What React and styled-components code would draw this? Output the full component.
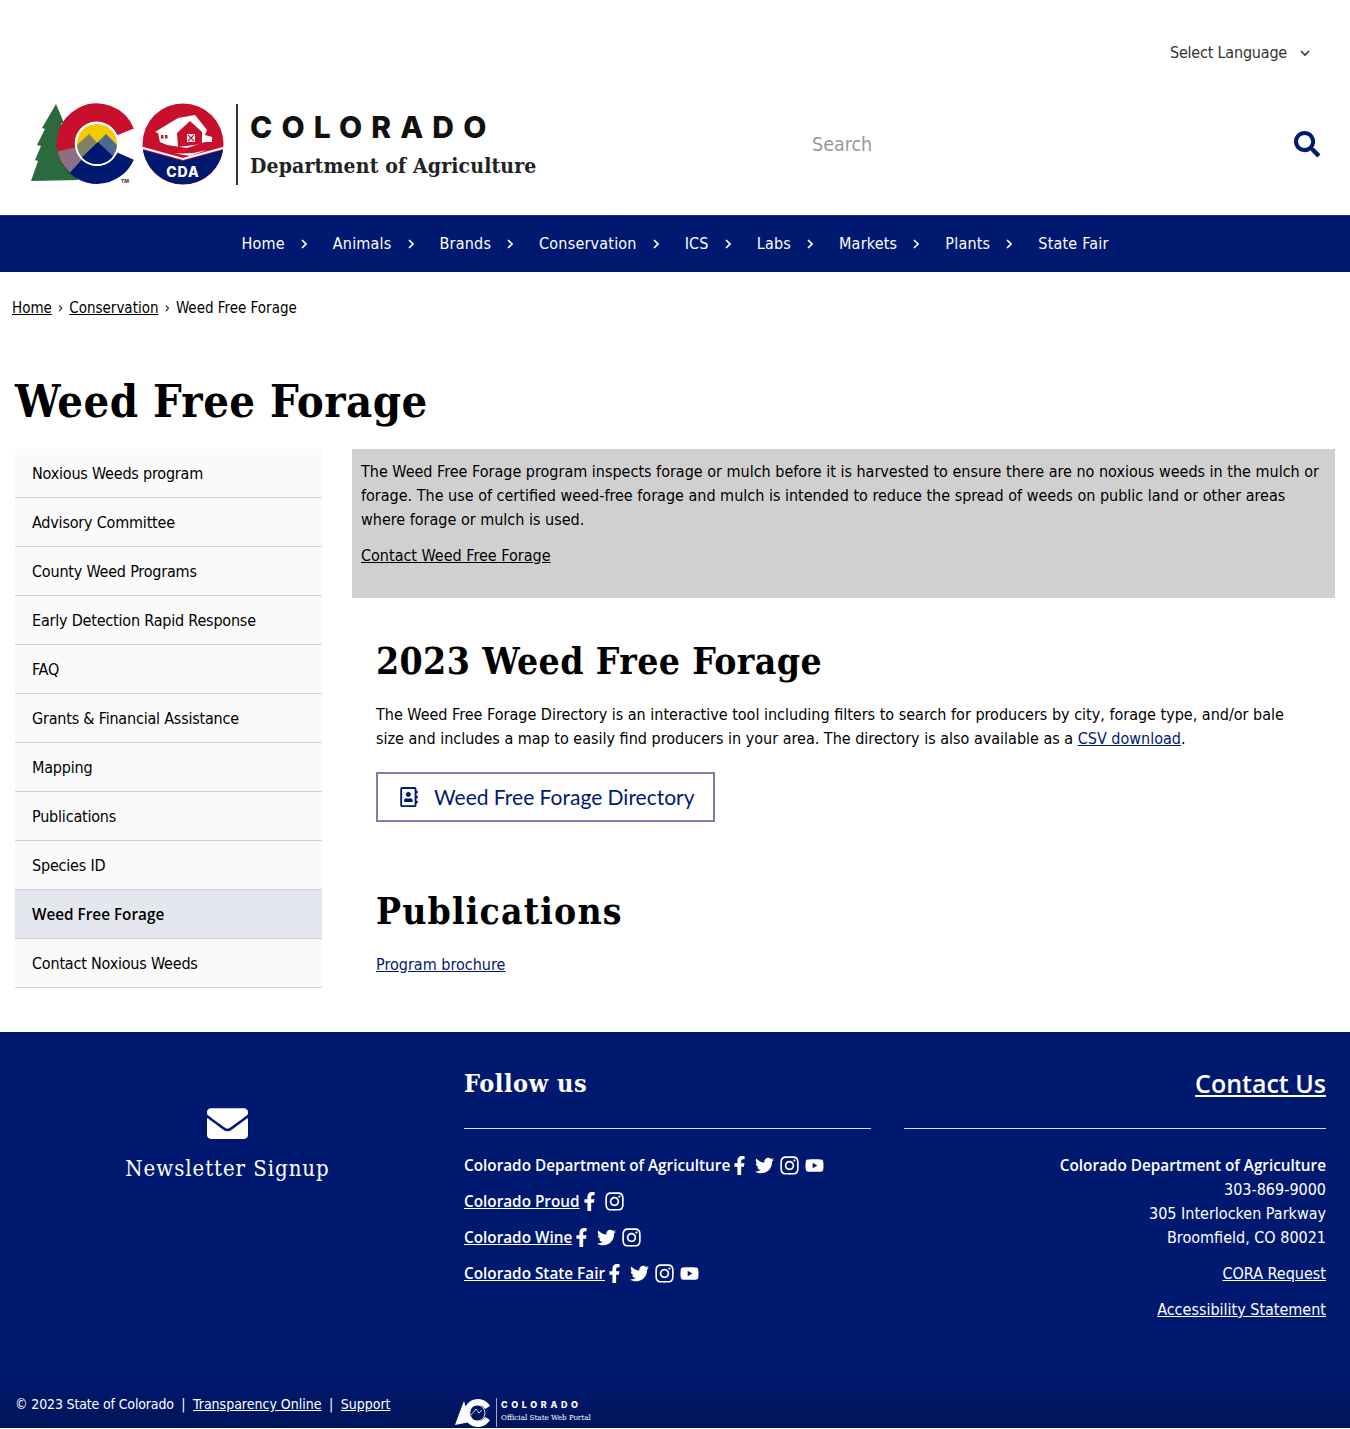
import React from 'react';
import styled, { createGlobalStyle } from 'styled-components';
import { FaFacebookF, FaTwitter, FaInstagram, FaYoutube, FaEnvelope, FaSearch, FaRegAddressBook } from 'react-icons/fa';

const NAVY = '#001970';
const BODY_FONT = `"DejaVu Sans Condensed", "DejaVu Sans", sans-serif`;
const STRONG_FONT = `"Open Sans", "Noto Sans", sans-serif`;
const SLAB_FONT = `"DejaVu Serif Condensed", "DejaVu Serif", serif`;

const GlobalStyle = createGlobalStyle`
  html, body { margin: 0; padding: 0; background: #fff; }
  body { font-family: ${BODY_FONT}; font-stretch: condensed; font-size: 16px; line-height: 24px; color: #000; }
  a { color: inherit; }
  * { box-sizing: border-box; }
`;

const Page = styled.div`
  width: 1350px;
  height: 1429px;
  display: flex;
  flex-direction: column;
`;

const LangBar = styled.div`
  height: 103px;
  padding: 41px 40px 0 0;
  display: flex;
  justify-content: flex-end;
`;
const LangSelect = styled.div`
  display: flex;
  align-items: center;
  height: 24px;
  gap: 13px;
  color: #333;
  letter-spacing: -0.2px;
`;

const Header = styled.header`
  height: 112px;
  display: flex;
  align-items: flex-start;
  padding-left: 30px;
`;
const LogoWrap = styled.div`
  display: flex;
  align-items: center;
  height: 83px;
  width: 782px;
`;
const LogoDivider = styled.div`
  width: 2px;
  height: 81px;
  background: #333;
  margin: 0 12px 0 6px;
`;
const LogoText = styled.div`
  display: flex;
  flex-direction: column;
`;
const StateName = styled.div`
  font-family: "Inter", sans-serif;
  font-stretch: normal;
  font-weight: 800;
  font-size: 30px;
  line-height: 36px;
  letter-spacing: 9.1px;
  color: #111;
`;
const DeptName = styled.div`
  font-family: ${SLAB_FONT};
  font-weight: 700;
  font-size: 21px;
  line-height: 30px;
  letter-spacing: 0.15px;
  color: #222;
  margin-top: 6px;
`;
const Search = styled.div`
  flex: 1;
  height: 83px;
  display: flex;
  align-items: center;
  justify-content: space-between;
  padding-right: 30px;
  font-size: 19.5px;
  color: #999;
  svg { color: ${NAVY}; margin-bottom: 1px; }
`;

const Nav = styled.nav`
  height: 57px;
  background: ${NAVY};
  border-top: 1px solid #1b2b78;
  display: flex;
  justify-content: center;
  align-items: center;
  color: #fff;
  letter-spacing: 0.2px;
`;
const NavItem = styled.div`
  display: flex;
  align-items: center;
  margin-right: ${p => (p.$last ? 0 : 26)}px;
`;
const NavChevron = styled.svg`
  width: 6px;
  height: 10px;
  margin-left: 16px;
`;

const Crumbs = styled.div`
  padding: 24px 12px 0;
  height: 78px;
  display: flex;
  align-items: flex-start;
  gap: 6px;
  font-size: 15px;
`;
const Title = styled.h1`
  font-family: ${SLAB_FONT};
  font-weight: 700;
  font-size: 45px;
  line-height: 56px;
  letter-spacing: 0.45px;
  margin: 24px 0 19px 15px;
  height: 56px;
`;

const Columns = styled.div`
  display: grid;
  grid-template-columns: 307px 983px;
  column-gap: 30px;
  padding-left: 15px;
  height: 583px;
`;
const SideNav = styled.ul`
  list-style: none;
  margin: 0;
  padding: 0;
`;
const SideItem = styled.li`
  height: 49px;
  padding: ${p => (p.$active ? 0 : 2)}px 0 0 17px;
  display: flex;
  align-items: center;
  background: ${p => (p.$active ? '#e5e7ee' : '#fafafa')};
  border-bottom: 1px solid #d4d4d4;
  font-family: ${p => (p.$active ? STRONG_FONT : BODY_FONT)};
  font-stretch: ${p => (p.$active ? 'normal' : 'condensed')};
  font-size: ${p => (p.$active ? 15.3 : 16)}px;
  font-weight: ${p => (p.$active ? 600 : 400)};
  letter-spacing: ${p => (p.$active ? 0 : -0.2)}px;
`;

const Callout = styled.div`
  height: 149px;
  background: #d0d0d0;
  padding: 11px 9px;
  p { margin: 0 0 12px; }
`;
const Content = styled.div`
  padding: 0 24px;
`;
const Heading = styled.h2`
  font-family: ${SLAB_FONT};
  font-weight: 700;
  font-size: 37px;
  line-height: 46px;
  letter-spacing: ${p => p.$track}px;
  margin: ${p => p.$top}px 0 ${p => p.$bottom}px;
`;
const Para = styled.p`
  margin: 0;
`;
const BlueLink = styled.a`
  color: ${NAVY};
  text-decoration: underline;
`;
const DirectoryButton = styled.a`
  width: 339px;
  height: 50px;
  margin-top: 21px;
  border: 2px solid #7b80a8;
  display: flex;
  align-items: center;
  gap: 15px;
  padding-left: 21px;
  font-family: "Lato", sans-serif;
  font-stretch: normal;
  font-size: 21px;
  color: ${NAVY};
`;

const Footer = styled.footer`
  height: 396px;
  background: ${NAVY};
  color: #fff;
  display: flex;
  flex-direction: column;
`;
const FooterMain = styled.div`
  height: 343px;
  display: grid;
  grid-template-columns: 455px 416px 455px;
`;
const SignupCol = styled.div`
  display: flex;
  flex-direction: column;
  align-items: center;
  padding-top: 71px;
`;
const SignupText = styled.div`
  font-family: ${SLAB_FONT};
  font-size: 22px;
  line-height: 32px;
  letter-spacing: 0.95px;
  margin-top: 9px;
`;
const FollowCol = styled.div`
  padding-left: 9px;
`;
const ContactCol = styled.div`
  padding-left: 33px;
  text-align: right;
`;
const ColHead = styled.div`
  height: 97px;
  padding-top: 35px;
  border-bottom: 1px solid #d8dcec;
  margin-bottom: 25px;
  font-size: 25px;
  line-height: 34px;
`;
const FollowHead = styled(ColHead)`
  font-family: ${SLAB_FONT};
  font-weight: 700;
  letter-spacing: 0.6px;
`;
const ContactHead = styled(ColHead)`
  font-family: ${STRONG_FONT};
  font-stretch: normal;
  font-weight: 600;
  padding-top: 34px;
  text-decoration: underline;
`;
const SocialRow = styled.div`
  display: flex;
  align-items: center;
  height: 36px;
  margin-top: -7px;
  margin-bottom: 7px;
  font-family: ${STRONG_FONT};
  font-stretch: normal;
  font-size: 15.3px;
  font-weight: 600;
`;
const SocialIcons = styled.span`
  display: flex;
  align-items: center;
  margin-left: -3px;
`;
const IconSlot = styled.span`
  width: 25px;
  display: flex;
  justify-content: center;
  font-size: ${p => p.$size}px;
`;
const ContactLine = styled.div`
  margin-top: ${p => p.$gap || 0}px;
`;
const ContactName = styled.div`
  font-family: ${STRONG_FONT};
  font-stretch: normal;
  font-size: 15.3px;
  font-weight: 600;
  margin: -1px 0 1px;
`;
const BottomBar = styled.div`
  height: 53px;
  background: linear-gradient(#001970, #00145a);
  display: flex;
  align-items: flex-start;
  padding: 17px 0 0 15px;
  font-size: 14px;
`;
const LegalRow = styled.div`
  width: 440px;
  display: flex;
  gap: 7.5px;
`;
const CopyNote = styled.span`
  letter-spacing: -0.15px;
`;
const PortalLogo = styled.div`
  display: flex;
  align-items: flex-start;
  margin-top: 6px;
`;
const PortalText = styled.div`
  margin-left: 4px;
  padding-left: 4px;
  border-left: 1px solid #aab;
  height: 29px;
`;
const PortalName = styled.div`
  font-family: "Inter", sans-serif;
  font-stretch: normal;
  font-weight: 800;
  font-size: 9px;
  line-height: 14px;
  letter-spacing: 3.6px;
`;
const PortalSub = styled.div`
  font-family: ${SLAB_FONT};
  font-size: 8px;
  line-height: 12px;
`;

const navItems = ['Home', 'Animals', 'Brands', 'Conservation', 'ICS', 'Labs', 'Markets', 'Plants', 'State Fair'];
const sideItems = ['Noxious Weeds program', 'Advisory Committee', 'County Weed Programs', 'Early Detection Rapid Response', 'FAQ', 'Grants & Financial Assistance', 'Mapping', 'Publications', 'Species ID', 'Weed Free Forage', 'Contact Noxious Weeds'];

const fb = { Icon: FaFacebookF, size: 19 };
const tw = { Icon: FaTwitter, size: 19 };
const ig = { Icon: FaInstagram, size: 21 };
const yt = { Icon: FaYoutube, size: 19 };

const socials = [
  { name: 'Colorado Department of Agriculture', plain: true, icons: [fb, tw, ig, yt] },
  { name: 'Colorado Proud', icons: [fb, ig] },
  { name: 'Colorado Wine', icons: [fb, tw, ig] },
  { name: 'Colorado State Fair', icons: [fb, tw, ig, yt] },
];

function CoLogo() {
  return (
    <svg width="200" height="83" viewBox="0 0 200 83">
      <defs>
        <clipPath id="sun"><circle cx="67" cy="41" r="20" /></clipPath>
      </defs>
      <path d="M26 1 L34 20 L31 20 L38 36 L34 36 L42 56 L48 77 L1 78 L8 58 L5 57 L11 43 L7 42 L15 26 L12 25 Z" fill="#2b6a3e" />
      <path d="M95.5 28.9 A31 31 0 1 0 40.2 56.5" fill="none" stroke="#c8102e" strokeWidth="18" />
      <path d="M40.2 56.5 A31 31 0 0 0 95.5 53.1" fill="none" stroke="#001970" strokeWidth="18" />
      <path d="M36.5 46.4 A31 31 0 0 0 46 63" fill="none" stroke="#8c6f80" strokeWidth="18" />
      <circle cx="67" cy="41" r="22" fill="#fff" />
      <g clipPath="url(#sun)">
        <rect x="47" y="21" width="40" height="40" fill="#f5c900" />
        <path d="M46 43 L59 31 L70 43 L70 62 L46 62 Z" fill="#7f8268" />
        <path d="M88 43 L76 31 L64 43 L64 62 L88 62 Z" fill="#4a6a92" />
        <path d="M50 56 L68 39 L86 56 L86 62 L50 62 Z" fill="#001970" />
      </g>
      <text x="91" y="80" fontSize="5" fontWeight="700" fill="#333" fontFamily="Inter, sans-serif">TM</text>
      <circle cx="153" cy="41" r="40.5" fill="#c8102e" />
      <path d="M113 47 L153 58 L193 47 A40.5 40.5 0 0 1 113 47 Z" fill="#001970" />
      <path d="M113 45 L153 56 L193 45" fill="none" stroke="#fff" strokeWidth="2" />
      <path d="M125 29 L148 15 L165 12 L177 27 L175 32 L182 34 L182 39 L175 39 L157 45 L137 42 L130 39 L128 30 Z" fill="#fff" />
      <path d="M147 30 L160 18 L172 29 L172 41 L148 44 Z" fill="#c8102e" />
      <rect x="157" y="31" width="8" height="8" fill="#fff" />
      <path d="M158 32 L164 38 M164 32 L158 38" stroke="#c8102e" strokeWidth="1.2" />
      <rect x="131" y="32" width="2.5" height="3.5" fill="#c8102e" />
      <rect x="135" y="32" width="2.5" height="3.5" fill="#c8102e" />
      <path d="M143 50 Q160 52 177 47 L160 53 Z" fill="#fff" />
      <text x="153" y="74" textAnchor="middle" fontSize="14" fontWeight="800" fill="#fff" fontFamily="Inter, sans-serif" letterSpacing="1">CDA</text>
    </svg>
  );
}

function PortalMark() {
  return (
    <svg width="37" height="29" viewBox="0 0 37 29">
      <path d="M9 3 L15 24 L0 27 L4 16 Z" fill="#fff" />
      <path d="M35 8 A14 14 0 1 0 35 22 L30 19 A8 8 0 1 1 30 11 Z" fill="#fff" />
      <circle cx="22" cy="15" r="8" fill="none" stroke="#fff" strokeWidth="0.8" />
      <path d="M16 17 L21 11 L24 15 L27 12" fill="none" stroke="#fff" strokeWidth="0.8" />
    </svg>
  );
}

function App() {
  return (
    <Page>
      <GlobalStyle />
      <LangBar>
        <LangSelect>
          Select Language
          <svg width="10" height="7" viewBox="0 0 10 7"><path d="M1 1 L5 5 L9 1" fill="none" stroke="#333" strokeWidth="1.6" /></svg>
        </LangSelect>
      </LangBar>
      <Header>
        <LogoWrap>
          <CoLogo />
          <LogoDivider />
          <LogoText>
            <StateName>COLORADO</StateName>
            <DeptName>Department of Agriculture</DeptName>
          </LogoText>
        </LogoWrap>
        <Search>
          Search
          <FaSearch size={26} />
        </Search>
      </Header>
      <Nav>
        {navItems.map((item, i) => (
          <NavItem key={item} $last={i === navItems.length - 1}>
            {item}
            {i < navItems.length - 1 && (
              <NavChevron viewBox="0 0 6 10"><path d="M1 1 L5 5 L1 9" fill="none" stroke="#fff" strokeWidth="1.6" /></NavChevron>
            )}
          </NavItem>
        ))}
      </Nav>
      <Crumbs>
        <a href="#">Home</a><span>›</span><a href="#">Conservation</a><span>›</span><span>Weed Free Forage</span>
      </Crumbs>
      <Title>Weed Free Forage</Title>
      <Columns>
        <SideNav>
          {sideItems.map(item => (
            <SideItem key={item} $active={item === 'Weed Free Forage'}>{item}</SideItem>
          ))}
        </SideNav>
        <div>
          <Callout>
            <p>The Weed Free Forage program inspects forage or mulch before it is harvested to ensure there are no noxious weeds in the mulch or forage. The use of certified weed-free forage and mulch is intended to reduce the spread of weeds on public land or other areas where forage or mulch is used.</p>
            <p><a href="#">Contact Weed Free Forage</a></p>
          </Callout>
          <Content>
            <Heading $top={40} $bottom={19} $track={0.4}>2023 Weed Free Forage</Heading>
            <Para>The Weed Free Forage Directory is an interactive tool including filters to search for producers by city, forage type, and/or bale size and includes a map to easily find producers in your area. The directory is also available as a <BlueLink href="#">CSV download</BlueLink>.</Para>
            <DirectoryButton>
              <FaRegAddressBook size={20} />
              Weed Free Forage Directory
            </DirectoryButton>
            <Heading $top={66} $bottom={19} $track={1.15}>Publications</Heading>
            <Para><BlueLink href="#">Program brochure</BlueLink></Para>
          </Content>
        </div>
      </Columns>
      <Footer>
        <FooterMain>
          <SignupCol>
            <FaEnvelope size={41} />
            <SignupText>Newsletter Signup</SignupText>
          </SignupCol>
          <FollowCol>
            <FollowHead>Follow us</FollowHead>
            {socials.map(s => (
              <SocialRow key={s.name}>
                {s.plain ? <span>{s.name}</span> : <a href="#">{s.name}</a>}
                <SocialIcons>
                  {s.icons.map(({ Icon, size }, i) => <IconSlot key={i} $size={size}><Icon /></IconSlot>)}
                </SocialIcons>
              </SocialRow>
            ))}
          </FollowCol>
          <ContactCol>
            <ContactHead>Contact Us</ContactHead>
            <ContactName>Colorado Department of Agriculture</ContactName>
            <ContactLine>303-869-9000</ContactLine>
            <ContactLine>305 Interlocken Parkway</ContactLine>
            <ContactLine>Broomfield, CO 80021</ContactLine>
            <ContactLine $gap={12}><a href="#">CORA Request</a></ContactLine>
            <ContactLine $gap={12}><a href="#">Accessibility Statement</a></ContactLine>
          </ContactCol>
        </FooterMain>
        <BottomBar>
          <LegalRow>
            <CopyNote>© 2023 State of Colorado</CopyNote><span>|</span><a href="#">Transparency Online</a><span>|</span><a href="#">Support</a>
          </LegalRow>
          <PortalLogo>
            <PortalMark />
            <PortalText>
              <PortalName>COLORADO</PortalName>
              <PortalSub>Official State Web Portal</PortalSub>
            </PortalText>
          </PortalLogo>
        </BottomBar>
      </Footer>
    </Page>
  );
}

export default App;
